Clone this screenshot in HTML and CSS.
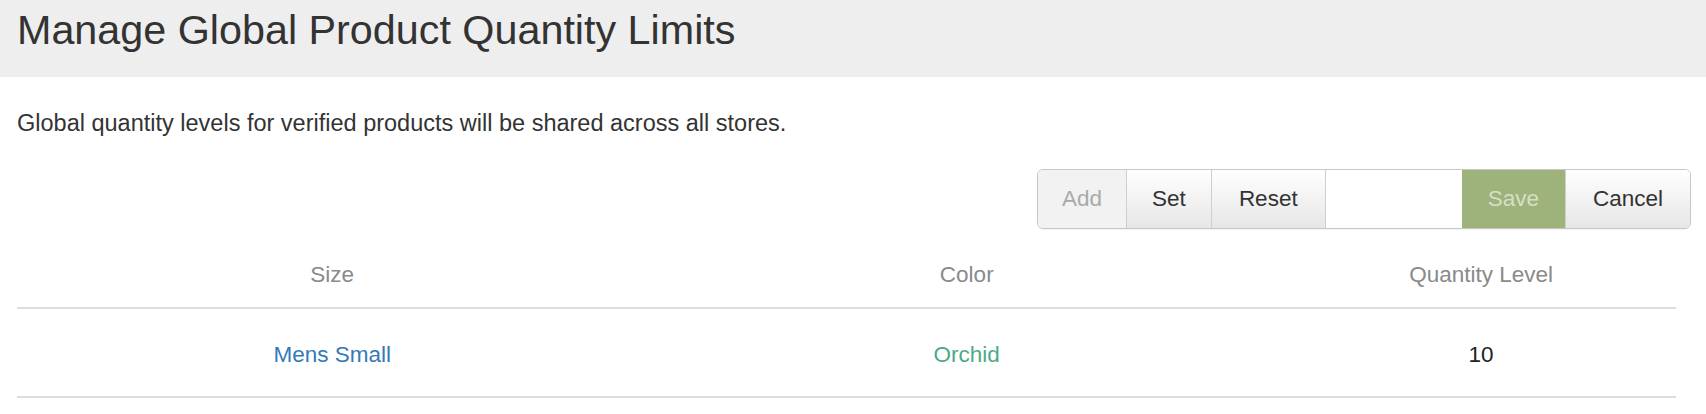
FILE: index.html
```html
<!DOCTYPE html>
<html lang="en">
  <head>
    <meta charset="UTF-8" />
    <title>Manage Global Product Quantity Limits</title>
    <link rel="stylesheet" href="styles.css">
  </head>
  <body>
    <div class="page-header">
      <h1>Manage Global Product Quantity Limits</h1>
    </div>

    <div class="content">
      <p class="intro">Global quantity levels for verified products will be shared across all stores.</p>

      <!-- Toolbar -->
      <div class="toolbar">
        <div class="btn-group">
          <button class="btn btn-add" disabled>Add</button>
          <button class="btn">Set</button>
          <button class="btn btn-wide">Reset</button>
          <input class="qty-input" type="text" />
          <button class="btn btn-save" disabled>Save</button>
          <button class="btn btn-wide">Cancel</button>
        </div>
      </div>

      <table class="limits">
        <thead>
          <tr>
            <th class="col-size">Size</th>
            <th class="col-color">Color</th>
            <th>Quantity Level</th>
          </tr>
        </thead>
        <tbody>
          <tr>
            <td><a href="#" class="size-link">Mens Small</a></td>
            <td class="color-name">Orchid</td>
            <td>10</td>
          </tr>
        </tbody>
      </table>
    </div>
  </body>
</html>
```

FILE: styles.css
```css
body {
  margin: 0;
  font-family: "Liberation Sans", Arial, sans-serif;
  background-color: #fff;
  color: #333;
}
.page-header {
  background-color: #eee;
  padding: 7px 17px 24px;
}
.page-header h1 {
  margin: 0;
  font-size: 41.3px;
  font-weight: normal;
  line-height: 46px;
  color: #333;
}
.content {
  padding: 0 15px 0 17px;
}
.intro {
  margin: 33px 0 0;
  font-size: 23.5px;
  line-height: 1.15;
  color: #333;
}
.toolbar {
  display: flex;
  justify-content: flex-end;
  margin-top: 32px;
}
.btn-group {
  display: flex;
  height: 60px;
  border: 1px solid #c8c8c8;
  border-radius: 6px;
  overflow: hidden;
  box-sizing: border-box;
  box-shadow: 0 1px 1px rgba(0, 0, 0, 0.05);
}
.btn {
  font-family: "Liberation Sans", Arial, sans-serif;
  font-size: 22.5px;
  padding: 0 25px;
  margin: 0;
  border: none;
  border-left: 1px solid #cfcfcf;
  color: #333;
  background: linear-gradient(#fff, #e6e6e6);
  cursor: pointer;
}
.btn:first-child {
  border-left: none;
}
.btn-add {
  padding: 0 24px;
}
.btn-wide {
  padding: 0 27px;
}
.btn:disabled {
  cursor: default;
  color: #aaa;
  background: #f2f2f2;
}
.btn-save,
.btn-save:disabled {
  background: #9db37b;
  color: #d6dfc6;
  border-left: none;
  padding: 0 26px;
}
.qty-input {
  width: 137px;
  box-sizing: border-box;
  border: none;
  border-left: 1px solid #cfcfcf;
  margin: 0;
  padding: 0 8px;
  font-size: 22.5px;
  background: #fff;
}
.limits {
  width: calc(100% - 15px);
  margin-top: 14px;
  border-collapse: collapse;
  table-layout: fixed;
  font-size: 22.5px;
}
.limits th,
.limits td {
  text-align: center;
  line-height: 1.15;
}
.limits th {
  font-weight: normal;
  color: #8a8a8a;
  padding: 19px 0;
  border-bottom: 2px solid #ddd;
}
.limits td {
  padding: 33px 0 28px;
  border-bottom: 2px solid #ddd;
  color: #222;
}
.col-size {
  width: 38%;
}
.col-color {
  width: 38.5%;
}
.size-link {
  color: #337ab7;
  text-decoration: none;
}
.color-name {
  color: #4caa86 !important;
}
```
